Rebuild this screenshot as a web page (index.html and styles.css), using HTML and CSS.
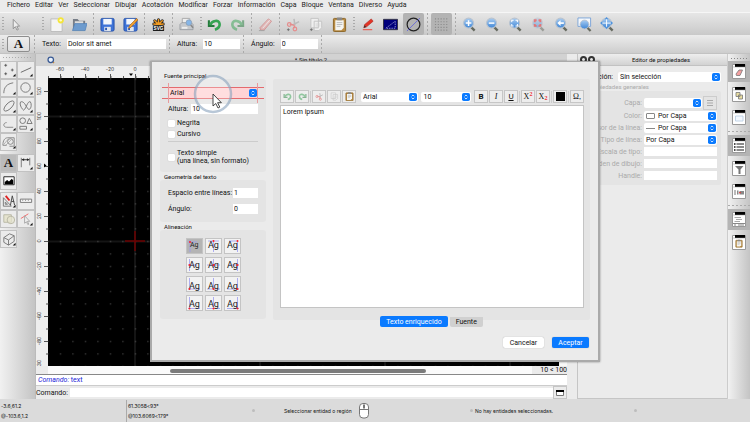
FILE: index.html
```html
<!DOCTYPE html>
<html lang="es">
<head>
<meta charset="utf-8">
<title>Sin título 2</title>
<link rel="stylesheet" href="styles.css">
</head>
<body>
<svg class="defs" aria-hidden="true">
  <defs>
    <linearGradient id="lens" x2="0" y2="1"><stop offset="0" stop-color="#a9cdf2"/><stop offset="1" stop-color="#3f86d6"/></linearGradient>
    <pattern id="dots" x="6" y="7" width="12.5" height="12.5" patternUnits="userSpaceOnUse"><rect x="6" y="6" width="1" height="1" fill="#6a6a6a"/></pattern>
    <pattern id="tick-x" x="12" width="12.5" height="12" patternUnits="userSpaceOnUse"><path d="M.5 10v2" stroke="#555"/></pattern>
    <symbol id="chev" viewBox="0 0 9 9"><rect width="9" height="9" rx="2" fill="#0a7aff"/><path d="M3 3.700 4.500 2.200 6 3.700M3 5.300 4.500 6.800 6 5.300" fill="none" stroke="#fff" stroke-width=".9"/></symbol>
    <symbol id="mag" viewBox="0 0 16 16"><path d="m9.500 10.500 4 4" stroke="#666a60" stroke-width="2.600"/><circle cx="7" cy="6.500" r="5.300" fill="url(#lens)" stroke="#b9c3cf" stroke-width="1.200"/></symbol>
    <symbol id="undo" viewBox="0 0 16 16"><path d="M2 3.500v6h6" fill="none" stroke="#237a3a" stroke-width="2.200"/><path d="M3.500 8.500C5 4 13 2 13.500 7.500c.2 3-2 5-5 6" fill="none" stroke="#35a352" stroke-width="2.800"/></symbol>
    <symbol id="cut" viewBox="0 0 16 16"><path d="M8.500 2 9.500 9M14 5 7 8.500" stroke="#bbb" stroke-width="1.600"/><path d="M9 9 4 7.500M9 9v3" stroke="#e58c8c" stroke-width="1.500"/><circle cx="3.500" cy="8" r="1.900" fill="none" stroke="#e58c8c" stroke-width="1.300"/><circle cx="9.500" cy="12.800" r="1.900" fill="none" stroke="#e58c8c" stroke-width="1.300"/></symbol>
    <symbol id="copy" viewBox="0 0 16 16"><path d="M2 1.500h8v10H2zM5.500 4.500h8v7l-3 3h-5z" fill="#efefef" stroke="#c4c4c4"/><path d="M7 7.500h5M7 9.500h5M7 11.500h3" stroke="#ccc" stroke-width=".7"/></symbol>
    <symbol id="paste" viewBox="0 0 16 16"><rect x="1.500" y="1.500" width="13" height="14" rx="1" fill="#b78a42" stroke="#8b6425"/><path d="M3.500 3.500h9v8l-2.500 2.500H3.500z" fill="#f5f5f2"/><rect x="5" y=".5" width="6" height="3" rx="1" fill="#888"/><path d="M5 6h6M5 8h6M5 10h4" stroke="#aaa" stroke-width=".8"/></symbol>
    <symbol id="floppy" viewBox="0 0 16 16"><rect x="1" y="1.500" width="14" height="13.500" rx="1.500" fill="#3e73d8" stroke="#2450a8"/><path d="M3.500 2h9v6h-9z" fill="#f2f6fc"/><path d="M4.500 10.500h7V15h-7z" fill="#dfe5ee"/><path d="M5.500 11.500h2V14h-2z" fill="#2c58b0"/></symbol>
    <symbol id="tri" viewBox="0 0 17 17"><path d="M15.500 12.500v3h-3z" fill="#111"/></symbol>
    <symbol id="win" viewBox="0 0 14 15"><path d="M.5.500h13v14H.5z" fill="#fff" stroke="#999"/><path d="M3 0h10v3H3z" fill="#000"/><path d="M1 3h12" stroke="#999" stroke-width=".5"/></symbol>
  </defs>
</svg>

<nav class="menubar" aria-label="Menú principal">
  <a href="#">Fichero</a><a href="#">Editar</a><a href="#">Ver</a><a href="#">Seleccionar</a><a href="#">Dibujar</a><a href="#">Acotación</a><a href="#">Modificar</a><a href="#">Forzar</a><a href="#">Información</a><a href="#">Capa</a><a href="#">Bloque</a><a href="#">Ventana</a><a href="#">Diverso</a><a href="#">Ayuda</a>
</nav>

<div class="toolbar" role="toolbar" aria-label="Herramientas">
  <i class="grip"></i>
  <button class="tool wide" aria-label="Seleccionar"><svg viewBox="0 0 16 16"><path d="M4.500 2.500v10l2.300-2.200L8.500 14l1.500-.8-1.700-3.400h3z" fill="#eee" stroke="#888" stroke-width=".9"/></svg></button>
  <i class="grip"></i>
  <button class="tool" aria-label="Nuevo"><svg viewBox="0 0 16 16"><path d="M2 2h12v13.500H2z" fill="#f4f4f4" stroke="#bbb"/><circle cx="12.500" cy="3.500" r="3.300" fill="#f4e53a"/><circle cx="12.500" cy="3.500" r="1.300" fill="#fffbd0"/></svg></button>
  <button class="tool" aria-label="Abrir"><svg viewBox="0 0 16 16"><path d="M1 14V2h5l1.500 2H14v10z" fill="#777e88"/><path d="M3 4.500h9V8H3z" fill="#ddd"/><path d="M.5 14.500 3 7h13l-2 7.500z" fill="#6d9bce" stroke="#4c7db5" stroke-width=".7"/></svg></button>
  <i class="sep"></i>
  <button class="tool" aria-label="Guardar"><svg><use href="#floppy"/></svg></button>
  <button class="tool" aria-label="Guardar como"><svg viewBox="0 0 16 16"><use href="#floppy"/><path d="m6 12 1-3 7.500-7.500 1.500 1.500-7.500 8z" fill="#f0a030" stroke="#a8641a" stroke-width=".7"/></svg></button>
  <i class="sep"></i>
  <button class="tool" aria-label="Exportar SVG"><svg viewBox="0 0 16 16"><path d="M8 8V3M8 8 4 4M8 8l4-4M8 8 3 7.500M8 8l5-.5" stroke="#222" stroke-width="3.200" stroke-linecap="round"/><path d="M8 8V3M8 8 4 4M8 8l4-4M8 8 3 7.500M8 8l5-.5" stroke="#f09a22" stroke-width="1.600" stroke-linecap="round"/><rect x="2" y="9" width="12" height="6" rx="1" fill="#1c1c1c"/><text x="8" y="14" text-anchor="middle" class="svg-tag">SVG</text></svg></button>
  <i class="sep"></i>
  <button class="tool" aria-label="Imprimir"><svg viewBox="0 0 16 16"><path d="M3.500 1.500h8v7h-8z" fill="#eee" stroke="#aaa"/><path d="m1 8 2-2h10l2 2v5.500H1z" fill="#c5c8cc" stroke="#92969c" stroke-width=".8"/><path d="M3 10.500h6v2H3z" fill="#eee"/><circle cx="10.500" cy="6" r="3" fill="#86b6e8" stroke="#8b9db3" stroke-width=".8"/><path d="m12.500 8.500 2.500 3" stroke="#888" stroke-width="1.500"/></svg></button>
  <i class="grip"></i>
  <button class="tool" aria-label="Deshacer"><svg><use href="#undo"/></svg></button>
  <button class="tool dim" aria-label="Rehacer"><svg class="flip"><use href="#undo"/></svg></button>
  <i class="sep"></i>
  <button class="tool dim" aria-label="Borrar"><svg viewBox="0 0 16 16"><path d="m2 11.500 9-9.500 3.500 2.500-8 9.500H3z" fill="#ec9a9a" stroke="#c95c5c"/><path d="m5 12 7.500-8.500" stroke="#fff"/><path d="M1 14.500h6" stroke="#777"/></svg></button>
  <i class="sep"></i>
  <button class="tool" aria-label="Cortar"><svg viewBox="0 0 16 16"><use href="#cut"/><path d="M1 13.500h3M2.500 12v3" stroke="#666" stroke-width=".8"/></svg></button>
  <button class="tool" aria-label="Copiar"><svg viewBox="0 0 16 16"><use href="#copy"/><path d="M1 13.500h3M2.500 12v3" stroke="#666" stroke-width=".8"/></svg></button>
  <button class="tool" aria-label="Pegar"><svg><use href="#paste"/></svg></button>
  <i class="grip"></i>
  <button class="tool" aria-label="Lápiz"><svg viewBox="0 0 16 16"><path d="m4 11.500 1-3.500 7-6 2 2.500-7 6z" fill="#e33426" stroke="#a5231a" stroke-width=".6"/><path d="m4 11.500.8-2.800 1.800 2z" fill="#333"/><path d="M3 13.500h10" stroke="#ec5b50" stroke-width="1.200"/></svg></button>
  <button class="tool" aria-label="Borrador"><svg viewBox="0 0 16 16"><path d="M.500 2.500h15v11H.5z" fill="#00007c" stroke="#334"/><path d="m3 12 10-7.500v7.500z" fill="none" stroke="#b9bce8" stroke-width=".8" stroke-dasharray="1.500 1"/></svg></button>
  <button class="tool on" aria-label="Grosor de línea"><svg viewBox="0 0 16 16"><circle cx="8" cy="8" r="6.800" fill="none" stroke="#222" stroke-width="1.300"/><path d="M1 15 15 1" stroke="#6e6ed8"/></svg></button>
  <i class="sep"></i>
  <button class="tool on" aria-label="Rejilla"><svg viewBox="0 0 16 16"><path d="M1 2h15M1 5h15M1 8h15M1 11h15M1 14h15" stroke="#8a8a8a" stroke-width="1.200" stroke-dasharray="1.200 1.800"/></svg></button>
  <i class="sep"></i>
  <button class="tool" aria-label="Acercar"><svg viewBox="0 0 16 16"><use href="#mag"/><path d="M4 6.500h6M7 3.500v6" stroke="#fff" stroke-width="1.600"/></svg></button>
  <button class="tool" aria-label="Alejar"><svg viewBox="0 0 16 16"><use href="#mag"/><path d="M4 6.500h6" stroke="#fff" stroke-width="1.600"/></svg></button>
  <button class="tool" aria-label="Zoom automático"><svg viewBox="0 0 16 16"><use href="#mag"/><path d="M4 5.500V3.500h2M8 3.500h2v2M10 7.500v2H8M6 9.500H4v-2" fill="none" stroke="#fff" stroke-width="1.100"/></svg></button>
  <button class="tool dim" aria-label="Zoom a selección"><svg viewBox="0 0 16 16"><use href="#mag"/><path d="M4 5.500V3.500h2M8 3.500h2v2M10 7.500v2H8M6 9.500H4v-2" fill="none" stroke="#f01818" stroke-width="2"/></svg></button>
  <button class="tool" aria-label="Vista anterior"><svg viewBox="0 0 16 16"><use href="#mag"/><path d="M6 6.500h4.500" stroke="#fff" stroke-width="1.800"/><path d="M7 3.500v6l-3.500-3z" fill="#fff"/></svg></button>
  <button class="tool" aria-label="Zoom de ventana"><svg viewBox="0 0 16 16"><path d="M1 1h13.500v9H1z" fill="#f5f8fc" stroke="#7ba3d6"/><path d="m10.500 11 4 4" stroke="#666a60" stroke-width="2.400"/><circle cx="8" cy="8" r="4.700" fill="url(#lens)" stroke="#b9c3cf"/></svg></button>
  <button class="tool" aria-label="Desplazar vista"><svg viewBox="0 0 16 16"><use href="#mag"/><path d="M7 1v11M1 6.500h12" stroke="#fff"/><path d="m7 0 2 2.500H5zM7 13 5 10.500h4zM0 6.500 2.500 4.500v4zM14 6.500l-2.500-2v4z" fill="#4d92dd"/></svg></button>
</div>

<div class="options">
  <i class="grip"></i>
  <button class="mode" aria-label="Texto">A</button>
  <i class="sep"></i>
  <label for="o-text">Texto:</label><input id="o-text" class="o-text" value="Dolor sit amet">
  <i class="sep"></i>
  <label for="o-height">Altura:</label><input id="o-height" class="o-num" value="10">
  <i class="sep"></i>
  <label for="o-angle">Ángulo:</label><input id="o-angle" class="o-num" value="0">
  <i class="sep"></i>
</div>

<main class="workspace">
  <aside class="palette">
    <div class="group">
      <button aria-label="Punto"><svg viewBox="0 0 17 17"><path d="M5 2v3M3.500 3.500h3M12 7v3M10.500 8.500h3M5 11v3M3.500 12.500h3" stroke="#444" stroke-width=".8"/><use href="#tri"/></svg></button>
      <button aria-label="Línea"><svg viewBox="0 0 17 17"><path d="m3 11 11-5" stroke="#666"/><use href="#tri"/></svg></button>
      <button aria-label="Arco"><svg viewBox="0 0 17 17"><path d="M3 14C3 8 6 4 13 3" fill="none" stroke="#777"/><use href="#tri"/></svg></button>
      <button aria-label="Círculo"><svg viewBox="0 0 17 17"><circle cx="8" cy="8" r="5" fill="none" stroke="#777"/><use href="#tri"/></svg></button>
      <button aria-label="Elipse"><svg viewBox="0 0 17 17"><ellipse cx="8.500" cy="8.500" rx="7" ry="3" transform="rotate(-45 8.500 8.500)" fill="none" stroke="#777"/><use href="#tri"/></svg></button>
      <button aria-label="Spline"><svg viewBox="0 0 17 17"><path d="M6 13C2 10 1 3 4 4c3 0 5 6 7 8 3 1 4-6 2-8-3-1-4 7-7 9z" fill="none" stroke="#777"/><use href="#tri"/></svg></button>
      <button aria-label="Polilínea"><svg viewBox="0 0 17 17"><path d="M13 12H6c-4 0-4-5 0-5" fill="none" stroke="#888"/><use href="#tri"/></svg></button>
      <button aria-label="Formas"><svg viewBox="0 0 17 17"><circle cx="5" cy="5" r="3" fill="none" stroke="#777"/><path d="m12 2.500 3 5.500H9.500zM2 11h7v3H2z" fill="none" stroke="#777"/><use href="#tri"/></svg></button>
      <button aria-label="Sombreado"><svg viewBox="0 0 17 17"><path d="M2 12c0-5 2-8 5-8h7v9H9M2 12h4" fill="none" stroke="#888"/><circle cx="10" cy="8" r="3" fill="none" stroke="#888"/><path d="m3 11 5-6M5 12l6-6" stroke="#999" stroke-width=".7"/><use href="#tri"/></svg></button>
    </div>
    <div class="group">
      <button class="on letter" aria-label="Texto">A</button>
      <button aria-label="Acotación"><svg viewBox="0 0 17 17"><path d="M3.500 3v10M12.500 3v8" stroke="#777"/><path d="M4 5h8" stroke="#333"/><path d="m4 5 2.500-1.500v3zM12 5 9.500 3.500v3z" fill="#222"/><use href="#tri"/></svg></button>
      <button aria-label="Imagen"><svg viewBox="0 0 17 17"><path d="M3 4h11v8.500H3z" fill="#fff" stroke="#222"/><path d="M4 12V9.500l2.500-2 2 1.500 3-3L13 8v4z" fill="#000"/></svg></button>
    </div>
    <div class="group">
      <button aria-label="Modificar"><svg viewBox="0 0 17 17"><path d="M2.500 5v9H11zM4.500 9.500v2.500h2.500z" fill="#eee" stroke="#777"/><path d="m5 3 4 5" stroke="#d22" stroke-width="2"/><path d="m12 3-2 10M12 3l2.500 10M11 9h3" stroke="#444"/><use href="#tri"/></svg></button>
      <button aria-label="Medir"><svg viewBox="0 0 17 17"><path d="M2.500 6.500h12v3.500h-12z" fill="#f6f6f6" stroke="#777"/><path d="M5 7v1.500M8 7v1.500M11 7v1.500" stroke="#777" stroke-width=".7"/></svg></button>
      <button aria-label="Bloques"><svg viewBox="0 0 17 17"><path d="M3 4h8v8H3z" fill="#e6e4cf" stroke="#b9b8a5"/><circle cx="10.500" cy="9.500" r="4" fill="#e6e4cf" fill-opacity=".7" stroke="#b9b8a5"/></svg></button>
      <button aria-label="Selección"><svg viewBox="0 0 17 17"><path d="M3 8 11 3" stroke="#f06a6a"/><path d="M7 5v8l2-1.500 1.500 3 1-.5-1.500-3h2.500z" fill="#eee" stroke="#999" stroke-width=".8"/><use href="#tri"/></svg></button>
    </div>
    <div class="group">
      <button aria-label="Proyección isométrica"><svg viewBox="0 0 17 17"><path d="m3 7 6-4 5 2v6l-6 4-5-3zM3 7l5 2.500 6-4.500M8 9.500V15" fill="none" stroke="#777"/><use href="#tri"/></svg></button>
    </div>
  </aside>

  <section class="center">
    <header class="doc-tab"><svg class="doc-icon" viewBox="0 0 16 16"><path d="m10 10 4 4" stroke="#c98a3a" stroke-width="3"/><circle cx="7.500" cy="7.500" r="5.500" fill="#e8f1fb" stroke="#3a5a94" stroke-width="2.500"/></svg><span>* Sin título 2</span></header>
    <div class="sheet">
      <svg class="ruler-x" height="12"><rect x="12" width="100%" height="12" fill="url(#tick-x)"/>
        <g class="rule" text-anchor="middle"><text x="24" y="5">-60</text><text x="49" y="5">-40</text><text x="74" y="5">-20</text><text x="99" y="5">0</text></g><path d="M24.500 8v4M49.500 8v4M74.500 8v4M99.500 8v4" stroke="#555"/><path d="M93 7.500h4L95 10z"/></svg>
      <svg class="ruler-y" width="12">
        <path d="M8 13.500h4M8 38.500h4M8 63.500h4M8 88.500h4M8 113.500h4M8 138.500h4M8 163.500h4M8 188.500h4M8 213.500h4M8 238.500h4M8 263.500h4M10 26h2M10 51h2M10 76h2M10 101h2M10 126h2M10 151h2M10 176h2M10 201h2M10 226h2M10 251h2M10 276h2" stroke="#555"/>
        <path d="M8 85.500v4l2.500-2z"/>
        <g class="rule" text-anchor="middle"><text transform="translate(5 13) rotate(-90)">120</text><text transform="translate(5 38) rotate(-90)">100</text><text transform="translate(5 63) rotate(-90)">80</text><text transform="translate(5 88) rotate(-90)">60</text><text transform="translate(5 113) rotate(-90)">40</text><text transform="translate(5 138) rotate(-90)">20</text><text transform="translate(5 163) rotate(-90)">0</text><text transform="translate(5 188) rotate(-90)">-20</text><text transform="translate(5 213) rotate(-90)">-40</text><text transform="translate(5 238) rotate(-90)">-60</text><text transform="translate(5 263) rotate(-90)">-80</text><text transform="translate(5 285) rotate(-90)">30</text></g></svg>
      <svg class="canvas"><rect width="100%" height="100%" fill="#000"/><path d="M87 0v400M212 0v400M337 0v400M462 0v400M0 38.500h600M0 163.500h600" stroke="#151515" stroke-width="2"/><rect width="100%" height="100%" fill="url(#dots)"/><path d="M77 163h20M87 153v20" stroke="#6d0000" stroke-width="1.500"/></svg>
      <div class="vbar"></div>
    </div>
    <div class="hbar"><div class="track"><div class="thumb"></div></div><span>10 &lt; 100</span></div>
    <div class="log"><em>Comando:</em> text</div>
    <div class="prompt"><label for="cmd">Comando:</label><input id="cmd"><button aria-label="Ventana de comandos"><svg viewBox="0 0 8 6"><path d="M.5.500h7v5h-7z" fill="#fff" stroke="#777"/><path d="M0 0h8v2H0z"/></svg></button></div>
  </section>

  <aside class="props">
    <header><button aria-label="Cerrar"></button><button aria-label="Desacoplar"></button><span>Editor de propiedades</span></header>
    <div class="pick"><label for="p-sel">Selección:</label><span class="combo"><select id="p-sel"><option>Sin selección</option></select><svg><use href="#chev"/></svg></span></div>
    <h2>Propiedades generales</h2>
    <div class="fields">
      <label for="p-layer">Capa:</label><span class="split"><span class="combo"><select id="p-layer"><option></option></select><svg><use href="#chev"/></svg></span><button aria-label="Lista de capas"><svg viewBox="0 0 8 8"><path d="M1 1.500h6M1 4h6M1 6.500h6" stroke="#aaa"/></svg></button></span>
      <label for="p-color">Color:</label><span class="combo lead"><i class="swatch"></i><select id="p-color"><option>Por Capa</option></select><svg><use href="#chev"/></svg></span>
      <label for="p-weight">Grosor de la línea:</label><span class="combo lead"><i class="stroke"></i><select id="p-weight"><option>Por Capa</option></select><svg><use href="#chev"/></svg></span>
      <label for="p-type">Tipo de línea:</label><span class="combo"><select id="p-type"><option>Por Capa</option></select><svg><use href="#chev"/></svg></span>
      <label for="p-scale">Escala de tipo:</label><input id="p-scale">
      <label for="p-order">Orden de dibujo:</label><input id="p-order">
      <label for="p-handle">Handle:</label><input id="p-handle">
    </div>
  </aside>

  <aside class="dock">
    <i class="grip-h"></i>
    <button class="on" aria-label="Propiedades"><svg viewBox="0 0 14 15"><use href="#win"/><path d="m4 10 3-4h3.500L8 11.500H4.500z" fill="#f4a0a0" stroke="#777" stroke-width=".8"/></svg></button>
    <button aria-label="Bloques"><svg viewBox="0 0 14 15"><use href="#win"/><path d="M4 5.500h4v4H4zM6.500 8h4v4h-4z" fill="#e8dda0" stroke="#777" stroke-width=".8"/></svg></button>
    <button aria-label="Vistas"><svg viewBox="0 0 14 15"><use href="#win"/><path d="M3.500 6h7.500v5H3.500z" fill="#f4f9ff" stroke="#b5cbe2" stroke-width=".8"/></svg></button>
    <i class="line"></i>
    <button class="on" aria-label="Capas"><svg viewBox="0 0 14 15"><use href="#win"/><path d="M4.500 6H12M4.500 9H12M4.500 12H12" stroke="#666" stroke-width="1.400"/><path d="M2 6h1.500M2 9h1.500M2 12h1.500" stroke="#111" stroke-width="1.500"/></svg></button>
    <button aria-label="Filtro"><svg viewBox="0 0 14 15"><use href="#win"/><path d="M3 5h8.500L8.500 8.500V13h-2V8.500z" fill="#777"/></svg></button>
    <button aria-label="Biblioteca"><svg viewBox="0 0 14 15"><use href="#win"/><path d="M3 6v5" stroke="#777"/><path d="M5 6.500h1.500v4H5zM7.500 7H12v3.500H7.500z" fill="#888"/><path d="M7 8.700h2" stroke="#e33"/></svg></button>
    <i class="line"></i>
    <button class="on" aria-label="Línea de comandos"><svg viewBox="0 0 14 15"><use href="#win"/><path d="M2.500 5.500H9M4 7.500h6M2.500 9.500H8" stroke="#aaa"/><path d="M1 11.500h12M2 13h2M6 13h6" stroke="#888"/></svg></button>
    <button aria-label="Portapapeles"><svg viewBox="0 0 14 15"><use href="#win"/><svg x="3" y="4" width="8" height="9"><use href="#paste"/></svg></svg></button>
  </aside>
</main>

<footer class="status">
  <div class="coords"><span>-3.6,61.2</span><span>@-103.6,1.2</span></div>
  <div class="coords"><span>61.3058&lt;93°</span><span>@103.6069&lt;179°</span></div>
  <i class="dot"></i>
  <div class="hint"><span>Seleccionar entidad o región</span><svg viewBox="0 0 10 16"><rect x=".5" y=".5" width="9" height="14.500" rx="3.500" fill="#fff" stroke="#777"/><path d="M.5 6.500h9M5 1v5" stroke="#777"/><path d="M5 2v3" stroke="#333"/></svg></div>
  <div class="picked"><i class="dot"></i><span>No hay entidades seleccionadas.</span></div>
  <i class="dot"></i>
</footer>

<div class="dialog" role="dialog" aria-label="Texto">
  <div class="columns">
    <div class="side">
      <fieldset class="font-box"><legend>Fuente principal</legend>
        <span class="combo marked"><select aria-label="Fuente"><option>Arial</option></select><svg><use href="#chev"/></svg>
          <svg class="pointer" viewBox="0 0 44 42" aria-hidden="true"><circle cx="22" cy="20" r="18" fill="#fff" fill-opacity=".25" stroke="#88a2bd" stroke-opacity=".6" stroke-width="2.500"/><path d="M22 20v12l2.800-2.500 2.200 4.500 1.800-.9-2.200-4.400h3.800z" fill="#fff" stroke="#333" stroke-width=".9"/></svg></span>
        <div class="pair"><label for="d-height">Altura:</label><input id="d-height" value="10"></div>
        <label class="check"><input type="checkbox">Negrita</label>
        <label class="check"><input type="checkbox">Cursivo</label>
        <hr>
        <label class="check"><input type="checkbox"><span>Texto simple<br>(una línea, sin formato)</span></label>
      </fieldset>
      <fieldset class="geo-box"><legend>Geometría del texto</legend>
        <label for="d-space">Espacio entre líneas:</label><input id="d-space" value="1">
        <label for="d-angle">Ángulo:</label><input id="d-angle" value="0">
      </fieldset>
      <fieldset class="align-box"><legend>Alineación</legend>
        <button class="on" aria-label="Arriba izquierda"><svg viewBox="0 0 15 14"><path class="guide" d="M3 1v12M1 3h9"/><text x="3" y="8">Ag</text><circle cx="3" cy="3" r="1"/></svg></button>
        <button aria-label="Arriba centro"><svg viewBox="0 0 15 14"><path class="guide" d="M7.500 1v12M2 2h11"/><text x="2" y="9">Ag</text><circle cx="7.500" cy="2" r="1"/></svg></button>
        <button aria-label="Arriba derecha"><svg viewBox="0 0 15 14"><path class="guide" d="M12.500 1v12M4 2h9"/><text x="2" y="9">Ag</text><circle cx="12.500" cy="2" r="1"/></svg></button>
        <button aria-label="Medio izquierda"><svg viewBox="0 0 15 14"><path class="guide" d="M2.500 1v12M1 7h9"/><text x="2" y="10">Ag</text><circle cx="2.500" cy="7" r="1"/></svg></button>
        <button aria-label="Medio centro"><svg viewBox="0 0 15 14"><path class="guide" d="M7.500 1v12M1 7h13"/><text x="2" y="10">Ag</text><circle cx="7.500" cy="7" r="1"/></svg></button>
        <button aria-label="Medio derecha"><svg viewBox="0 0 15 14"><path class="guide" d="M12.500 1v12M4 7h10"/><text x="2" y="10">Ag</text><circle cx="12.500" cy="7" r="1"/></svg></button>
        <button aria-label="Base izquierda"><svg viewBox="0 0 15 14"><path class="guide" d="M2.500 1v12M1 12h12"/><text x="2" y="12">Ag</text><circle cx="2.500" cy="12" r="1"/></svg></button>
        <button aria-label="Base centro"><svg viewBox="0 0 15 14"><path class="guide" d="M7.500 1v12M1 12h13"/><text x="2" y="12">Ag</text><circle cx="7.500" cy="12" r="1"/></svg></button>
        <button aria-label="Base derecha"><svg viewBox="0 0 15 14"><path class="guide" d="M12.500 1v12M2 12h12"/><text x="2" y="12">Ag</text><circle cx="12.500" cy="12" r="1"/></svg></button>
        <button aria-label="Abajo izquierda"><svg viewBox="0 0 15 14"><path class="guide" d="M2.500 1v12M1 12.500h12"/><text x="2" y="11">Ag</text><circle cx="2.500" cy="12.500" r="1"/></svg></button>
        <button aria-label="Abajo centro"><svg viewBox="0 0 15 14"><path class="guide" d="M7.500 1v12M1 12.500h13"/><text x="2" y="11">Ag</text><circle cx="7.500" cy="12.500" r="1"/></svg></button>
        <button aria-label="Abajo derecha"><svg viewBox="0 0 15 14"><path class="guide" d="M12.500 1v12M2 12.500h12"/><text x="2" y="11">Ag</text><circle cx="12.500" cy="12.500" r="1"/></svg></button>
      </fieldset>
    </div>
    <div class="editor-col">
      <div class="editor">
        <div class="format">
          <button class="dim" aria-label="Deshacer"><svg><use href="#undo"/></svg></button>
          <button class="dim" aria-label="Rehacer"><svg class="flip"><use href="#undo"/></svg></button>
          <i class="bar"></i>
          <button aria-label="Cortar"><svg><use href="#cut"/></svg></button>
          <button aria-label="Copiar"><svg><use href="#copy"/></svg></button>
          <button aria-label="Pegar"><svg><use href="#paste"/></svg></button>
          <span class="combo family"><select aria-label="Fuente"><option>Arial</option></select><svg><use href="#chev"/></svg></span>
          <span class="combo size"><select aria-label="Tamaño"><option>10</option></select><svg><use href="#chev"/></svg></span>
          <button aria-label="Negrita"><b>B</b></button>
          <button class="serif" aria-label="Cursiva"><i>I</i></button>
          <button aria-label="Subrayado"><u>U</u></button>
          <i class="bar"></i>
          <button class="serif" aria-label="Superíndice">X<sup>2</sup></button>
          <button class="serif" aria-label="Subíndice">X<sub>2</sub></button>
          <i class="bar"></i>
          <button aria-label="Color"><i class="black"></i></button>
          <i class="bar"></i>
          <button class="serif" aria-label="Símbolos">Ω,</button>
        </div>
        <textarea aria-label="Contenido">Lorem ipsum</textarea>
      </div>
      <div class="tabs" role="tablist"><button class="active" role="tab" aria-selected="true">Texto enriquecido</button><button role="tab">Fuente</button></div>
      <div class="actions"><button>Cancelar</button><button class="primary">Aceptar</button></div>
    </div>
  </div>
</div>
</body>
</html>
```
FILE: styles.css
```css
* { box-sizing: border-box; }
body {
  margin: 0;
  height: 100vh;
  display: flex;
  flex-direction: column;
  overflow: hidden;
  background: #ebebeb;
  color: #111;
  font: 7px/8px Roboto, "Liberation Sans", sans-serif;
}
button, input, select, textarea {
  font: inherit;
  color: inherit;
  margin: 0;
  padding: 0;
  border: 0;
  border-radius: 0;
  background: none;
  min-width: 0;
}
input, textarea, select { background: #fff; outline: 0; }
button { display: flex; align-items: center; justify-content: center; }
svg { display: block; flex: none; }
.defs { position: absolute; width: 0; height: 0; }
.flip { transform: scaleX(-1); }
.dim svg { opacity: .5; }

.menubar { display: flex; gap: 5px; height: 12px; padding: 1px 7px; }
.menubar a { color: #222; text-decoration: none; }

.toolbar {
  display: flex;
  height: 23px;
  background: linear-gradient(#e6e6e6, #c9c9c9);
  border-top: 1px solid #f6f6f6;
}
.grip, .sep { flex: none; width: 5px; display: flex; justify-content: center; }
.grip::before { content: ""; margin: 4px 0; width: 2px; background: repeating-linear-gradient(#aaa 0 1px, transparent 1px 3px); }
.sep::before { content: ""; width: 1px; background: repeating-linear-gradient(#aaa 0 2px, transparent 2px 4px); }
.tool { width: 23px; flex: none; }
.tool.wide { margin-right: 12px; }
.tool svg { width: 15px; height: 15px; }
.tool.on { background: #b3b3b3; border-radius: 2px; width: 21px; margin: 0 1px; }
.svg-tag { font: bold 5px "Liberation Sans", sans-serif; fill: #fff; }

.options {
  display: flex;
  align-items: center;
  height: 19px;
  background: linear-gradient(#ececec, #cdcdcd);
  border-bottom: 1px solid #c2c2c2;
}
.options .grip, .options .sep { align-self: stretch; }
.options input { height: 10px; padding: 0 1px; margin: 0 1px 0 6px; }
.options label { margin-left: 5px; }
.options .o-text { width: 99px; }
.options .o-num { width: 37px; }
.mode {
  width: 23px;
  height: 16px;
  margin: 0 2px;
  border: 1px solid #8e8e8e;
  border-radius: 2px;
  background: linear-gradient(#eee, #ddd);
  font: bold 13px/14px "Liberation Serif", serif;
}

.workspace { flex: 1; min-height: 0; display: flex; }

.palette {
  width: 36px;
  flex: none;
  display: flex;
  flex-direction: column;
  gap: 3px;
  background: linear-gradient(90deg, #f1f1f1, #c4c4c4);
  border-right: 1px solid #bbb;
}
.palette::before { content: ""; height: 1px; margin: 3px 3px 0; background: repeating-linear-gradient(90deg, #aaa 0 1px, transparent 1px 3px); }
.group { display: grid; grid-template-columns: 17px 18px; grid-auto-rows: 18px; margin-bottom: -1px; }
.group:first-child { margin-bottom: 0; }
.group button { border: 1px solid #c2c2c2; background: #ebebeb; }
.group svg { width: 16px; height: 16px; }
.group .on { background: #bbb; }
.letter { font: bold 13px/14px "Liberation Serif", serif; }

.center { flex: 1; min-width: 0; display: flex; flex-direction: column; margin-right: 10px; }
.doc-tab { height: 12px; background: #d2d2d2; display: flex; align-items: center; }
.doc-tab span { flex: 1; text-align: center; font-size: 6px; }
.doc-icon { width: 8px; height: 8px; margin-left: 11px; }
.sheet { flex: 1; min-height: 0; display: grid; grid-template: 12px 1fr / 12px 1fr 8px; background: #eee; }
.sheet svg { width: 100%; height: 100%; min-height: 0; }
.ruler-x { grid-column: 1 / 4; }
.rule { font: 5px Inter, sans-serif; fill: #333; }
.vbar { background: #f8f8f8; }
.hbar { display: flex; align-items: center; height: 9px; border-bottom: 1px solid #888; }
.track { flex: 1; background: #fafafa; height: 8px; margin-left: 12px; display: flex; align-items: center; padding: 1px 20% 0 23%; margin-right: 8px; }
.thumb { flex: 1; height: 4px; border-radius: 2px; background: #7b7b7b; }
.log { height: 11px; padding: 1px 2px; background: #fff; color: #2222d8; border-bottom: 1px solid #ccc; }
.prompt { display: flex; align-items: center; height: 13px; }
.prompt input { flex: 1; height: 9px; margin-left: 2px; }
.prompt button { width: 14px; height: 13px; border: 1px solid #c5c5c5; }
.prompt svg { width: 8px; height: 6px; }

.props { width: 150px; flex: none; border-left: 1px solid #c5c5c5; border-bottom: 1px solid #c5c5c5; }
.props header { display: flex; align-items: center; height: 12px; padding-left: 1px; background: linear-gradient(#eee, #d2d2d2); border-bottom: 1px solid #c2c2c2; font-size: 6px; }
.props header button { width: 7px; height: 7px; border: 2px solid #333; border-radius: 50%; background: #eee; margin-left: 1px; }
.props header span { flex: 1; text-align: center; }
.pick { display: flex; align-items: center; justify-content: flex-end; gap: 5px; margin: 6px 6px 2px 0; }
.pick .combo { flex: none; width: 103px; }
.pick label { white-space: nowrap; }
.props h2 { margin: 0; padding-left: 10px; font: 6px/6px Roboto, sans-serif; color: #aaa; }
.fields {
  display: grid;
  grid-template-columns: 1fr 73px;
  column-gap: 2px;
  row-gap: 2px;
  margin: 1px 6px 0 4px;
  padding: 6px 4px 4px 0;
  border-radius: 2px;
  background: #e4e4e4;
  align-items: center;
}
.fields label { color: #aaa; white-space: nowrap; justify-self: end; }
.fields input { height: 9px; width: 100%; margin-bottom: 1px; }
.split { display: flex; gap: 1px; align-items: center; }
.split button { width: 14px; height: 14px; margin: -1px 0; border: 1px solid #ccc; }
.split svg { width: 8px; height: 8px; }

.combo { position: relative; display: flex; align-items: center; flex: 1; height: 10px; background: #fff; border-radius: 2px; }
.combo select { appearance: none; flex: 1; height: 10px; padding: 0 10px 0 2px; background: none; }
.combo > svg { position: absolute; right: 1px; top: 1px; width: 8px; height: 8px; pointer-events: none; }
.swatch { width: 9px; height: 6px; margin: 0 1px 0 2px; border: 1px solid #888; border-radius: 1px; }
.stroke { width: 9px; height: 1px; margin: 0 1px 0 2px; background: #888; }

.dock { width: 23px; flex: none; display: flex; flex-direction: column; background: linear-gradient(90deg, #f1f1f1, #c4c4c4); border-left: 1px solid #ccc; }
.dock button { height: 23px; }
.dock .on { background: #b4b4b4; background-clip: content-box; padding: 1px 0; }
.dock button > svg { width: 14px; height: 15px; }
.grip-h { height: 1px; margin: 4px 3px 1px; background: repeating-linear-gradient(90deg, #888 0 1px, transparent 1px 3px); }
.line { height: 1px; margin: 2px 0; background: repeating-linear-gradient(90deg, #aaa 0 2px, transparent 2px 4px); }

.status { display: grid; grid-template-columns: 126px 126px 30px 187px 165px auto; align-items: center; height: 23px; background: #dbdbdb; font: 5px/10px Inter, sans-serif; }
.coords { display: flex; flex-direction: column; padding: 1px; }
.coords + .coords { border-left: 1px solid #aaa; }
.dot { display: block; width: 3px; height: 3px; border-radius: 50%; background: #bdbdbd; }
.hint, .picked { display: flex; align-items: center; }
.hint { gap: 7px; padding-left: 2px; }
.hint svg { width: 10px; height: 16px; }
.picked { gap: 2px; padding-left: 1px; }

.dialog {
  position: absolute;
  top: 61px;
  left: 20%;
  right: 20%;
  padding: 10px 8px 12px;
  background: #ebebeb;
  border: 1px solid #aaa;
  border-width: 1px 2px 2px;
  box-shadow: 0 0 2px rgba(0, 0, 0, .4);
}
.columns { display: flex; gap: 7px; }
.side { width: 106px; flex: none; }
fieldset { position: relative; margin: 7px 0 8px; padding: 8px; border: 0; border-radius: 3px; background: #e4e4e4; min-width: 0; }
legend { position: absolute; top: -7px; left: 4px; padding: 0; font-size: 6px; }
.font-box { display: flex; flex-direction: column; height: 93px; }
.font-box .combo { flex: none; height: 12px; border-radius: 0; }
.marked { background: #ffd3d5; }
.marked::before { content: ""; position: absolute; inset: 0 -6px; border: solid #e46a6e; border-width: 1px 0; }
.marked::after { content: ""; position: absolute; inset: -4px 0; border: solid #e89a9c; border-width: 0 1px; pointer-events: none; }
.combo.marked > svg { top: 2px; }
.combo.marked > .pointer { left: 23px; top: -13px; right: auto; width: 44px; height: 42px; }
.pair { display: flex; align-items: center; gap: 3px; margin: 5px 0; }
.pair input { flex: 1; }
fieldset input { height: 10px; padding: 0 1px; }
.check { display: flex; align-items: center; gap: 2px; margin-bottom: 3px; }
.check input { appearance: none; width: 7px; height: 7px; border-radius: 1px; box-shadow: 0 0 1px #aaa; }
hr { width: 100%; margin: 0 0 7px; border: 0; border-top: 1px solid #ccc; }
.geo-box { display: grid; grid-template-columns: 1fr 25px; gap: 6px 0; align-items: center; }
.geo-box label { white-space: nowrap; }
.align-box { display: grid; grid-template-columns: repeat(3, 17px); justify-content: center; gap: 3px 2px; margin-bottom: 0; }
.align-box button { height: 16px; border: 1px solid #c4c4c4; background: #f2f2f2; }
.align-box .on { background: #b4b4b4; }
.align-box svg { width: 15px; height: 14px; overflow: visible; }
.align-box text { font-size: 9px; fill: #222; }
.align-box .on text { font-size: 7px; }
.align-box circle { fill: #f22; }
.guide { stroke: #9a9af0; stroke-width: .8; fill: none; }

.editor-col { flex: 1; min-width: 0; display: flex; flex-direction: column; padding-top: 7px; }
.editor { background: #e4e4e4; padding: 11px 6px 12px 7px; border-radius: 2px; }
.format { display: flex; align-items: center; gap: 1px; margin-bottom: 2px; }
.format button { width: 14px; height: 13px; flex: none; border: 1px solid #c6c6c6; background: #ededed; font-size: 8px; }
.format button svg { width: 9px; height: 9px; }
.format .combo { margin: 0 1px; }
.format .family { flex: 58; margin-left: 4px; }
.format .size { flex: 50; margin-right: 2px; }
.bar { width: 1px; height: 12px; background: #ccc; }
.serif { font-family: "Liberation Serif", serif; }
.serif sup, .serif sub { font-size: 6px; line-height: 7px; color: #e33; font-weight: bold; }
.serif sup { align-self: flex-start; }
.serif sub { align-self: flex-end; }
.black { width: 9px; height: 9px; background: #000; }
textarea { display: block; width: 100%; height: 203px; padding: 2px; border: 1px solid #c4c4c4; resize: none; }
.tabs { display: flex; justify-content: center; gap: 2px; margin-top: -4px; align-items: flex-end; }
.tabs button { height: 10px; padding: 0 6px; background: #d0d0d0; border-radius: 0 0 2px 2px; }
.tabs .active { height: 11px; background: #0a7aff; color: #fff; border-radius: 2px; }
.actions { display: flex; justify-content: flex-end; gap: 8px; margin-top: 10px; padding-right: 1px; }
.actions button { width: 41px; height: 11px; background: #fff; border-radius: 2px; box-shadow: 0 0 1px #999; }
.actions .primary { width: 37px; background: #0a7aff; color: #fff; }
```
